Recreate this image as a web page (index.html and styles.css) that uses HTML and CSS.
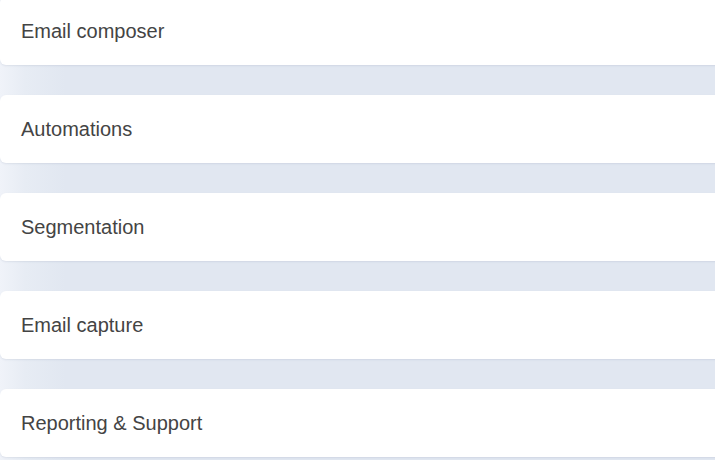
FILE: index.html
```html
<!DOCTYPE html>
<html>
<head>
<meta charset="utf-8">
<link rel="stylesheet" href="styles.css">
</head>
<body>
<div class="list">
  <div class="card">Email composer</div>
  <div class="card">Automations</div>
  <div class="card">Segmentation</div>
  <div class="card">Email capture</div>
  <div class="card">Reporting &amp; Support</div>
</div>
</body>
</html>
```
FILE: styles.css
```css
html, body {
  margin: 0;
  padding: 0;
  height: 100%;
}
body {
  background: linear-gradient(to right, #f0f3f9 0px, #e7ecf4 25px, #e1e7f1 65px, #e1e7f1 100%);
  font-family: "Liberation Sans", Arial, sans-serif;
  overflow: hidden;
}
.list {
  display: flex;
  flex-direction: column;
  gap: 30px;
  margin-top: -3px;
  margin-right: -10px;
}
.card {
  height: 68px;
  background: #ffffff;
  border-radius: 6px;
  box-shadow: 0 1px 2px rgba(60, 80, 120, 0.10);
  display: flex;
  align-items: center;
  padding-left: 21px;
  font-size: 20px;
  color: #444444;
}
```
